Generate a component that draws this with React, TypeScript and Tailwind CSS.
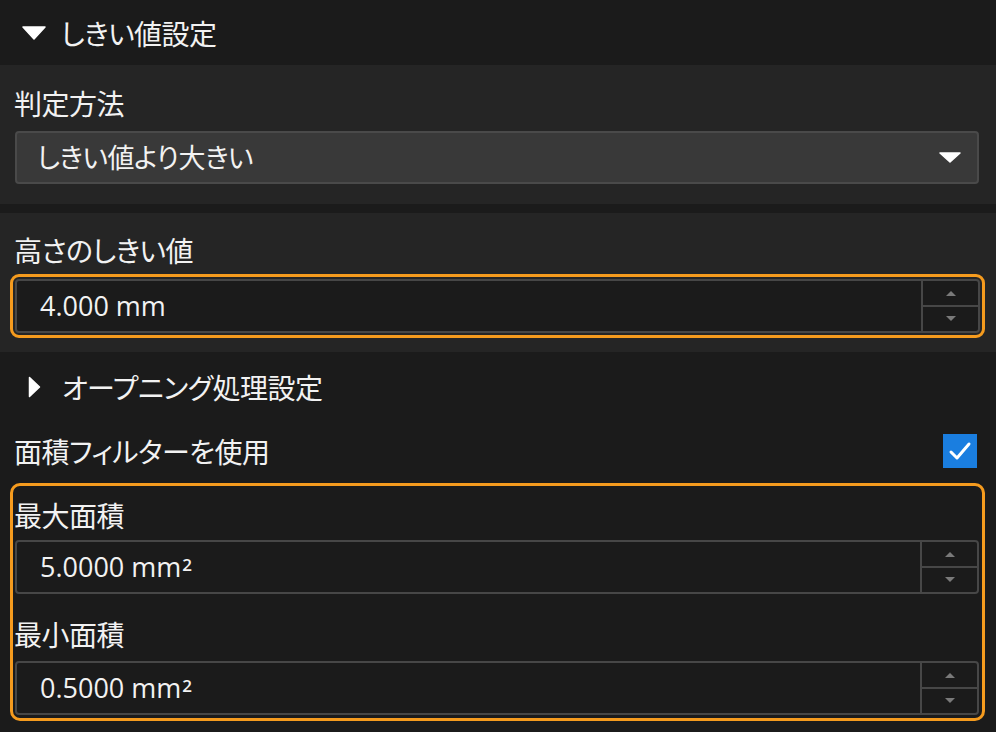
import type { ReactNode } from "react";

const jp = "font-['Noto_Sans_CJK_JP',sans-serif] [font-feature-settings:'palt'] tracking-[-0.5px]";
const num = "font-['Open_Sans','Noto_Sans_CJK_JP',sans-serif]";

function Label({ children }: { children: ReactNode }) {
  return (
    <div className={`${jp} text-[28px] leading-[36px] text-[#f2f2f2] pl-[14px]`}>
      {children}
    </div>
  );
}

function SpinBox({ value, unit }: { value: string; unit: ReactNode }) {
  return (
    <div className="flex h-[54px] rounded-[4px] border-2 border-[#474747] bg-[#1b1b1b]">
      <div className={`${num} flex flex-1 items-center pl-[23px] text-[27px] text-[#f2f2f2]`}>
        {value}
        <span className="ml-[7px]">{unit}</span>
      </div>
      <div className="flex w-[57px] flex-col border-l-2 border-[#474747]">
        <div className="flex flex-1 items-center justify-center border-b-2 border-[#474747]">
          <svg width="12" height="6" viewBox="0 0 12 6">
            <path d="M1 6 L6 1 L11 6 Z" fill="#7a7a7a" />
          </svg>
        </div>
        <div className="flex flex-1 items-center justify-center">
          <svg width="12" height="6" viewBox="0 0 12 6">
            <path d="M1 0 L6 5 L11 0 Z" fill="#7a7a7a" />
          </svg>
        </div>
      </div>
    </div>
  );
}

function Mm2() {
  return (
    <>
      mm<sup className="relative -top-[6px] ml-[1px] text-[17px] font-semibold">2</sup>
    </>
  );
}

export default function App() {
  return (
    <div className="h-[732px] w-[996px] overflow-hidden bg-[#1b1b1b]">
      {/* Header */}
      <div className="flex h-[65px] items-center">
        <svg className="ml-[22px]" width="24" height="14" viewBox="0 0 24 14">
          <path d="M1 1 L23 1 L12 13 Z" fill="#ffffff" strokeLinejoin="round" stroke="#ffffff" strokeWidth="1.5" />
        </svg>
        <span className={`${jp} ml-[15px] text-[28px] leading-[36px] text-[#f2f2f2]`}>
          しきい値設定
        </span>
      </div>

      {/* 判定方法 */}
      <div className="h-[139px] bg-[#252525] pr-[17px] pt-[20px]">
        <Label>判定方法</Label>
        <div className="ml-[15px] mt-[10px] flex h-[53px] items-center justify-between rounded-[4px] border-2 border-[#4a4a4a] bg-[#393939] pl-[20px] pr-[16px]">
          <span className={`${jp} text-[27px] text-[#f2f2f2]`}>しきい値より大きい</span>
          <svg width="22" height="11" viewBox="0 0 22 11">
            <path d="M1 1 L21 1 L11 10 Z" fill="#ffffff" stroke="#ffffff" strokeWidth="1.5" strokeLinejoin="round" />
          </svg>
        </div>
      </div>

      <div className="h-[9px]" />

      {/* 高さのしきい値 */}
      <div className="h-[139px] bg-[#252525] pt-[19px]">
        <Label>高さのしきい値</Label>
        <div className="ml-[10px] mr-[11px] mt-[6px] rounded-[9px] border-[3px] border-[#f59b1e] p-[2px]">
          <SpinBox value="4.000" unit="mm" />
        </div>
      </div>

      {/* lower area */}
      <div className="pt-[17px]">
        <div className="flex h-[36px] items-center">
          <svg className="ml-[28px]" width="13" height="22" viewBox="0 0 13 22">
            <path d="M1.5 1.5 L11.5 11 L1.5 20.5 Z" fill="#ffffff" stroke="#ffffff" strokeWidth="1.5" strokeLinejoin="round" />
          </svg>
          <span className={`${jp} ml-[21px] text-[28px] leading-[36px] text-[#f2f2f2]`}>
            オープニング処理設定
          </span>
        </div>

        <div className="mt-[26px] flex h-[40px] items-center justify-between pr-[19px]">
          <Label>面積フィルターを使用</Label>
          <div className="flex h-[34px] w-[34px] items-center justify-center bg-[#1a7ee0]">
            <svg width="24" height="20" viewBox="0 0 24 20">
              <path d="M3 11 L9 17 L21 3" fill="none" stroke="#ffffff" strokeWidth="3" strokeLinecap="round" strokeLinejoin="round" />
            </svg>
          </div>
        </div>

        <div className="ml-[10px] mr-[11px] mt-[12px] h-[238px] rounded-[10px] border-[3px] border-[#f59b1e] pt-[11px]">
          <div className="-ml-[13px]">
            <Label>最大面積</Label>
          </div>
          <div className="ml-[2px] mr-[3px] mt-[7px]">
            <SpinBox value="5.0000" unit={<Mm2 />} />
          </div>
          <div className="-ml-[13px] mt-[22px]">
            <Label>最小面積</Label>
          </div>
          <div className="ml-[2px] mr-[3px] mt-[9px]">
            <SpinBox value="0.5000" unit={<Mm2 />} />
          </div>
        </div>
      </div>
    </div>
  );
}
